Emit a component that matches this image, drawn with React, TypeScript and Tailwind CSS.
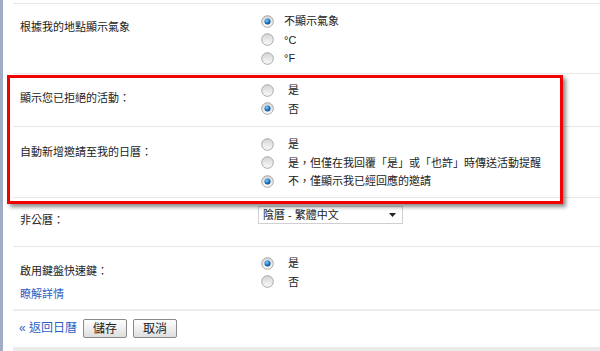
import React from "react";

const font = { fontFamily: '"Liberation Sans", "Noto Sans CJK TC", sans-serif' };

function Radio({ checked }: { checked?: boolean }) {
  return (
    <svg width="13" height="13" viewBox="0 0 13 13" className="shrink-0">
      <defs>
        <linearGradient id="rg" x1="0" y1="0" x2="0" y2="1">
          <stop offset="0" stopColor="#d4d4d4" />
          <stop offset="1" stopColor="#fbfbfb" />
        </linearGradient>
        <radialGradient id="bd" cx="0.4" cy="0.35" r="0.7">
          <stop offset="0" stopColor="#7fd0ff" />
          <stop offset="0.6" stopColor="#1a74c8" />
          <stop offset="1" stopColor="#0b3f7a" />
        </radialGradient>
      </defs>
      <circle cx="6.5" cy="6.5" r="5.8" fill="url(#rg)" stroke="#a8a8a8" strokeWidth="1" />
      {checked && <circle cx="6.5" cy="6.5" r="3" fill="url(#bd)" />}
    </svg>
  );
}

function Opt({ label, checked, gap = "ml-[10px]" }: { label: string; checked?: boolean; gap?: string }) {
  return (
    <div className="flex items-center h-[18.5px] ml-[3px]">
      <Radio checked={checked} />
      <span className={`${gap} text-[11px] text-[#222]`}>{label}</span>
    </div>
  );
}

export default function App() {
  return (
    <div className="relative w-[600px] h-[351px] bg-white overflow-hidden" style={font}>
      <div className="absolute left-0 top-0 bottom-0 w-[3px] bg-[#9eadc4]" />
      <div className="ml-[13px] flex flex-col">
        <div className="h-[3px]" />
        <div className="h-px bg-[#e8e8e8]" />

        <div className="flex h-[70px] border-b border-[#e8e8e8]">
          <div className="w-[245px] pl-[7px] pt-[14px] text-[11px] text-[#222] leading-[18px]">根據我的地點顯示氣象</div>
          <div className="pt-[8px]">
            <Opt label="不顯示氣象" checked />
            <Opt label="°C" />
            <Opt label="°F" />
          </div>
        </div>

        <div className="flex h-[53px] border-b border-[#e8e8e8]">
          <div className="w-[245px] pl-[7px] pt-[15px] text-[11px] text-[#222] leading-[18px]">顯示您已拒絕的活動：</div>
          <div className="pt-[7px]">
            <Opt label="是" gap="ml-[14px]" />
            <Opt label="否" checked gap="ml-[14px]" />
          </div>
        </div>

        <div className="flex h-[71px] border-b border-[#e8e8e8]">
          <div className="w-[245px] pl-[7px] pt-[16px] text-[11px] text-[#222] leading-[18px]">自動新增邀請至我的日曆：</div>
          <div className="pt-[8px]">
            <Opt label="是" gap="ml-[14px]" />
            <Opt label="是，但僅在我回覆「是」或「也許」時傳送活動提醒" gap="ml-[14px]" />
            <Opt label="不，僅顯示我已經回應的邀請" checked gap="ml-[14px]" />
          </div>
        </div>

        <div className="flex h-[49px] border-b border-[#e8e8e8]">
          <div className="w-[245px] pl-[7px] pt-[13px] text-[11px] text-[#222] leading-[18px]">非公曆：</div>
          <div className="pt-[8px]">
            <div className="flex items-center justify-between w-[145px] h-[18px] border border-[#d0d0d0] bg-white pl-[4px] pr-[6px]">
              <span className="text-[11px] text-[#222]">陰曆 - 繁體中文</span>
              <svg width="7" height="4" viewBox="0 0 7 4">
                <path d="M0 0h7L3.5 4z" fill="#222" />
              </svg>
            </div>
          </div>
        </div>

        <div className="flex h-[64px] border-b-2 border-[#ececec]">
          <div className="w-[245px] pl-[7px] pt-[15px] text-[11px] leading-[18px]">
            <div className="text-[#222]">啟用鍵盤快速鍵：</div>
            <div className="mt-[5px] text-[#2f5fc4]">瞭解詳情</div>
          </div>
          <div className="pt-[7px]">
            <Opt label="是" checked gap="ml-[14px]" />
            <Opt label="否" gap="ml-[14px]" />
          </div>
        </div>

        <div className="flex items-start h-[36px] pl-[6px] pt-[8px] gap-[6px]">
          <span className="h-[19px] leading-[19px] text-[12px] text-[#2f5fc4]">« 返回日曆</span>
          <button className="w-[44px] h-[19px] text-[12px] text-[#222] border border-[#8a8a8a] rounded-[2px] bg-gradient-to-b from-white to-[#dedede] leading-none">儲存</button>
          <button className="w-[44px] h-[19px] text-[12px] text-[#222] border border-[#8a8a8a] rounded-[2px] bg-gradient-to-b from-white to-[#dedede] leading-none">取消</button>
        </div>
        <div className="h-[8px] bg-[#ebebeb]" />
      </div>

      <div className="absolute left-[7px] top-[75px] w-[556px] h-[129px] border-[3px] border-[#f00000] shadow-[3px_3px_4px_rgba(0,0,0,0.45)] pointer-events-none" />
    </div>
  );
}
